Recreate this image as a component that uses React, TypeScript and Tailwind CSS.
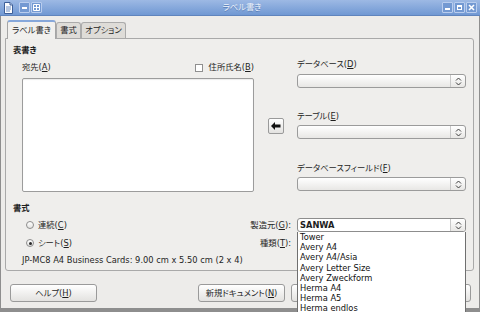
import React from 'react';

const uiFont = "font-['DejaVu_Sans','Noto_Sans_CJK_JP',sans-serif] [font-feature-settings:'palt']";

const manufacturers = [
  'Tower',
  'Avery A4',
  'Avery A4/Asia',
  'Avery Letter Size',
  'Avery Zweckform',
  'Herma A4',
  'Herma A5',
  'Herma endlos',
];

function Spin() {
  return (
    <svg width="7" height="9" viewBox="0 0 7 9" className="text-[#3a3a3a]">
      <path d="M1 3.5 L3.5 1 L6 3.5 M1 5.5 L3.5 8 L6 5.5" fill="none" stroke="currentColor" strokeWidth="1" />
    </svg>
  );
}

function Combo({ value }: { value?: string }) {
  return (
    <div className="flex h-[14px] w-[169px] items-stretch overflow-hidden rounded-[3px] border border-[#9b9b9b] bg-linear-to-b from-white to-[#e8e7e5]">
      <span className="flex flex-1 items-center pl-[3px] font-bold">{value}</span>
      <span className="w-px bg-[#c9c9c9]" />
      <span className="flex w-[14px] items-center justify-center">
        <Spin />
      </span>
    </div>
  );
}

function Key({ label, k }: { label: string; k: string }) {
  return (
    <span>
      {label}(<span className="underline">{k}</span>)
    </span>
  );
}

function Radio({ checked }: { checked?: boolean }) {
  return (
    <span className="flex h-[8px] w-[8px] items-center justify-center rounded-full border border-[#8d8d8d] bg-linear-to-b from-white to-[#e4e3e1]">
      {checked && <span className="h-[3px] w-[3px] rounded-full bg-[#2a2a2a]" />}
    </span>
  );
}

function Button({ children, className }: { children?: React.ReactNode; className?: string }) {
  return (
    <div className={'flex h-[18px] w-[87px] items-center justify-center rounded-[3px] border border-[#9a9a9a] bg-linear-to-b from-white to-[#e3e2e0] ' + (className ?? '')}>
      {children}
    </div>
  );
}

function WinBtn({ children }: { children: React.ReactNode }) {
  return (
    <div className="flex h-[11px] w-[11px] items-center justify-center rounded-[1px] border border-[#b9cdee] bg-[#7399d2]">
      {children}
    </div>
  );
}

function TitleBar() {
  return (
    <div className="relative flex h-[16px] items-center bg-linear-to-b from-[#9db9e4] to-[#7098d3] px-[3px] border-b border-[#5f84bd]">
      <div className="flex items-center gap-[3px]">
        <svg width="11" height="12" viewBox="0 0 11 12">
          <path d="M1.5 0.5 H7 L9.5 3 V11.5 H1.5 Z" fill="#fbfcfe" stroke="#3d5f99" />
          <path d="M7 0.5 V3 H9.5" fill="#c8d6ee" stroke="#3d5f99" />
          <path d="M3 5 H8 M3 7 H8 M3 9 H7" stroke="#6f8fc4" />
        </svg>
        <div className="ml-[2px] flex gap-[1px]">
          <WinBtn>
            <span className="h-[2px] w-[5px] bg-white" />
          </WinBtn>
          <WinBtn>
            <svg width="7" height="7" viewBox="0 0 7 7">
              <path d="M0.5 0.5 H6.5 V6.5 H0.5 Z M3.5 0.5 V6.5 M0.5 3.5 H6.5" fill="none" stroke="white" />
            </svg>
          </WinBtn>
        </div>
      </div>
      <div className="flex-1 text-center text-[#eef3fb] [text-shadow:0_1px_0_#5a7fb8]">ラベル書き</div>
      <div className="flex gap-[1px]">
        <WinBtn>
          <span className="mt-[3px] h-[2px] w-[5px] bg-white" />
        </WinBtn>
        <WinBtn>
          <span className="h-[5px] w-[5px] border border-white border-t-2" />
        </WinBtn>
        <WinBtn>
          <svg width="7" height="7" viewBox="0 0 7 7">
            <path d="M1 1 L6 6 M6 1 L1 6" stroke="white" strokeWidth="1.6" />
          </svg>
        </WinBtn>
      </div>
    </div>
  );
}

export default function App() {
  return (
    <div className={'relative flex h-[312px] w-[480px] flex-col overflow-hidden bg-[#edecea] text-[8.3px] leading-[11px] text-[#1e1e1e] ' + uiFont}>
      <TitleBar />
      <div className="flex flex-1 flex-col border-x border-b-[4px] border-x-[#8e8e8e] border-b-[#8e8e8e] px-[4px] pt-[4px]">
        {/* tabs */}
        <div className="flex h-[18px] items-end pl-[2px]">
          <div className="relative z-10 -mb-px flex h-[19px] w-[49px] items-center justify-center rounded-t-[3px] border border-b-0 border-[#a5a5a5] border-t-[#86a7da] border-t-2 bg-[#f1f0ee]">
            ラベル書き
          </div>
          <div className="flex h-[16px] w-[25px] items-center justify-center rounded-t-[3px] border border-b-0 border-[#ababab] bg-[#dedcd8]">書式</div>
          <div className="flex h-[16px] w-[45px] items-center justify-center rounded-t-[3px] border border-b-0 border-[#ababab] bg-[#dedcd8]">オプション</div>
        </div>

        {/* panel */}
        <div className="relative flex h-[233px] w-[469px] flex-col rounded-[3px] rounded-tl-none border border-[#a9a9a9] bg-[#efeeec]">
          <div className="flex h-[164px] items-start">
            <div className="ml-[7px] w-[241px] pt-[6px]">
              <div className="font-bold">表書き</div>
              <div className="pl-[9px]">
                <div className="mt-[6px] flex items-center justify-between">
                  <Key label="宛先" k="A" />
                  <span className="flex items-center gap-[6px]">
                    <span className="h-[8px] w-[8px] border border-[#8f8f8f] bg-white" />
                    <Key label="住所氏名" k="B" />
                  </span>
                </div>
                <div className="mt-[5px] h-[114px] rounded-[2px] border border-[#9c9c9c] bg-white shadow-[inset_0_1px_1px_rgba(0,0,0,0.08)]" />
              </div>
            </div>
            <div className="w-[43px] pl-[14px] pt-[79px]">
              <div className="flex h-[16px] w-[16px] items-center justify-center rounded-[2px] border border-[#9a9a9a] bg-linear-to-b from-white to-[#e3e2e0]">
                <svg width="10" height="8" viewBox="0 0 10 8">
                  <path d="M0 4 L4 0 V2.5 H9.5 V5.5 H4 V8 Z" fill="#111" />
                </svg>
              </div>
            </div>
            <div className="flex w-[169px] flex-col pt-[20px]">
              <Key label="データベース" k="D" />
              <div className="mt-[4px]">
                <Combo />
              </div>
              <div className="mt-[23px]">
                <Key label="テーブル" k="E" />
              </div>
              <div className="mt-[3px]">
                <Combo />
              </div>
              <div className="mt-[24px]">
                <Key label="データベースフィールド" k="F" />
              </div>
              <div className="mt-[3px]">
                <Combo />
              </div>
            </div>
          </div>

          <div className="ml-[7px] font-bold">書式</div>
          <div className="mt-[4px] flex h-[14px] items-center">
            <div className="flex flex-1 items-center gap-[4px] pl-[20px]">
              <Radio />
              <Key label="連続" k="C" />
            </div>
            <div className="mr-[6px]">
              <Key label="製造元" k="G" />:
            </div>
            <div className="relative z-20 mr-[7px]">
              <div className="flex h-[14px] w-[169px] items-stretch overflow-hidden rounded-[3px] border border-[#8d8d8d] bg-white">
                <span className="flex flex-1 items-center pl-[2px] font-bold">SANWA</span>
                <span className="w-px bg-[#c9c9c9]" />
                <span className="flex w-[14px] items-center justify-center bg-linear-to-b from-white to-[#e8e7e5]">
                  <Spin />
                </span>
              </div>
              <div className="absolute left-0 top-full w-[169px] border border-t-0 border-[#6f6f6f] bg-white pl-[2px] leading-[10.2px] text-[#111]">
                {manufacturers.map((m) => (
                  <div key={m}>{m}</div>
                ))}
              </div>
            </div>
          </div>
          <div className="mt-[4px] flex h-[14px] items-center">
            <div className="flex flex-1 items-center gap-[4px] pl-[20px]">
              <Radio checked />
              <Key label="シート" k="S" />
            </div>
            <div className="mr-[6px]">
              <Key label="種類" k="T" />:
            </div>
            <div className="mr-[7px] w-[169px]">
              <Combo />
            </div>
          </div>
          <div className="mt-[5px] pl-[16px]">JP-MC8 A4 Business Cards: 9.00 cm x 5.50 cm (2 x 4)</div>
        </div>

        {/* buttons */}
        <div className="mt-[13px] flex items-center pl-[5px]">
          <Button>
            <Key label="ヘルプ" k="H" />
          </Button>
          <div className="ml-auto flex gap-[6px] pr-[4px]">
            <Button>
              <Key label="新規ドキュメント" k="N" />
            </Button>
            <Button />
            <Button />
          </div>
        </div>
      </div>
    </div>
  );
}
